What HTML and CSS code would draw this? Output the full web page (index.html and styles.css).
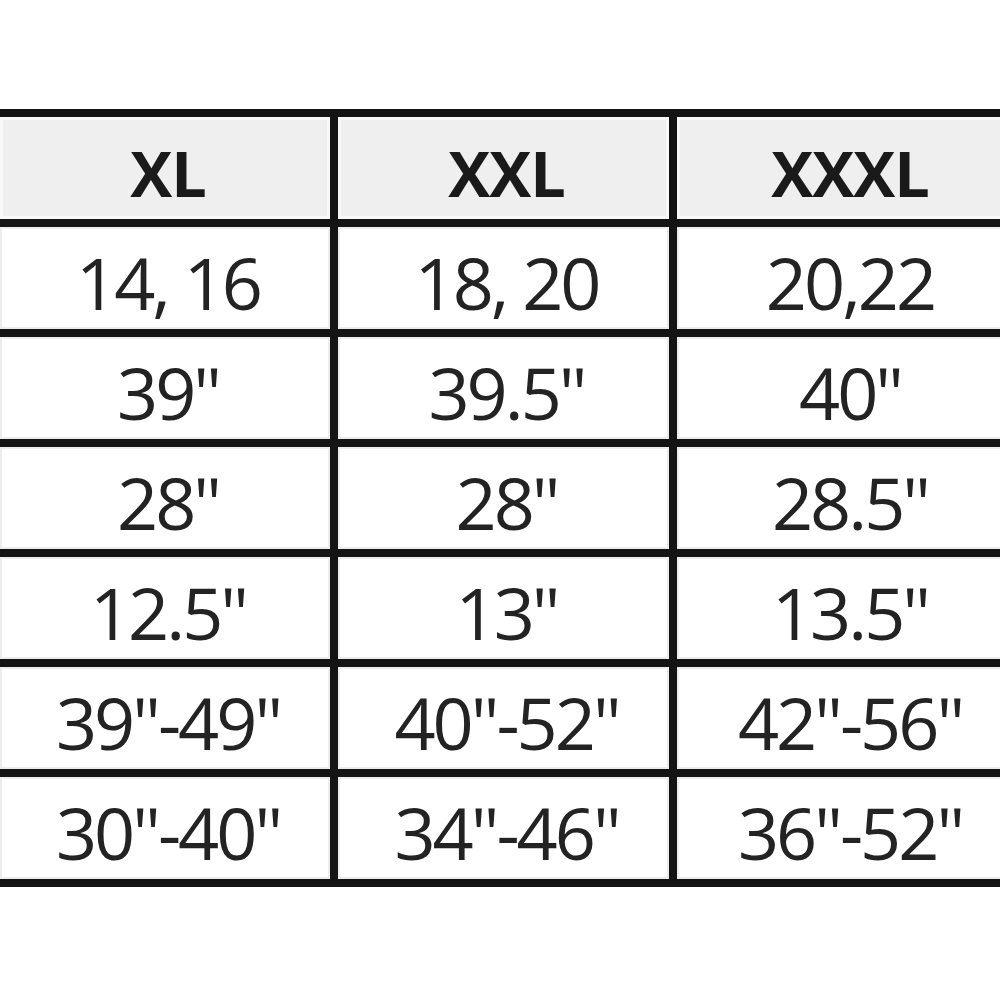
FILE: index.html
```html
<!DOCTYPE html>
<html>
<head>
<meta charset="utf-8">
<link rel="stylesheet" href="styles.css">
</head>
<body>
<div class="sheet">
  <div class="cell head">XL</div>
  <div class="cell head">XXL</div>
  <div class="cell head">XXXL</div>
  <div class="cell">14, 16</div>
  <div class="cell">18, 20</div>
  <div class="cell">20,22</div>
  <div class="cell">39"</div>
  <div class="cell">39.5"</div>
  <div class="cell">40"</div>
  <div class="cell">28"</div>
  <div class="cell">28"</div>
  <div class="cell">28.5"</div>
  <div class="cell">12.5"</div>
  <div class="cell">13"</div>
  <div class="cell">13.5"</div>
  <div class="cell">39"-49"</div>
  <div class="cell">40"-52"</div>
  <div class="cell">42"-56"</div>
  <div class="cell">30"-40"</div>
  <div class="cell">34"-46"</div>
  <div class="cell">36"-52"</div>
</div>
</body>
</html>
```
FILE: styles.css
```css
html, body {
  margin: 0;
  padding: 0;
  background: #ffffff;
  overflow: hidden;
}

body {
  width: 1000px;
  height: 1000px;
}

.sheet {
  display: grid;
  grid-template-columns: 330px 331px 340px;
  grid-auto-rows: 102px;
  gap: 8px;
  padding: 8px 0;
  margin-top: 109px;
  width: max-content;
  background: #141414;
}

.cell {
  display: flex;
  align-items: center;
  justify-content: center;
  padding: 8px 0 0 6px;
  box-sizing: border-box;
  background: #ffffff;
  box-shadow: inset 0 0 0 2px #ececec;
  font-family: "Open Sans", "Noto Sans", sans-serif;
  font-size: 72px;
  font-weight: 500;
  letter-spacing: -3px;
  color: #232323;
  white-space: nowrap;
}

.head {
  background: #efefef;
  box-shadow: inset 0 0 0 3px #f8f8f8;
  font-weight: 700;
  font-size: 63px;
  letter-spacing: -1px;
  color: #1a1a1a;
}
```
